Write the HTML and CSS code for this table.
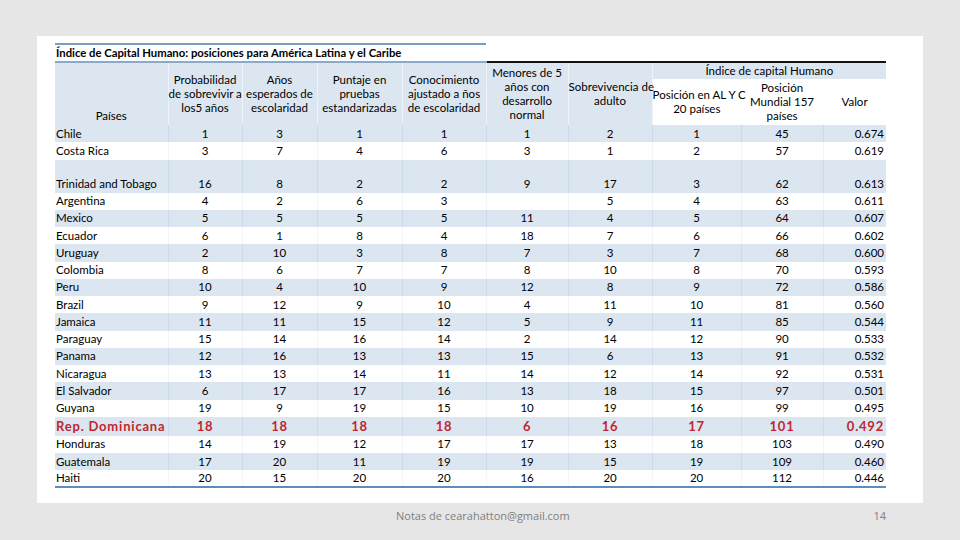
FILE: index.html
```html
<!DOCTYPE html>
<html lang="es">
<head>
<meta charset="utf-8">
<title>Índice de Capital Humano</title>
<link rel="stylesheet" href="styles.css">
</head>
<body>
<div class="page">
  <div class="slide">
    <table class="hci">
      <colgroup>
        <col class="c1"><col class="c2"><col class="c3"><col class="c4"><col class="c5">
        <col class="c6"><col class="c7"><col class="c8"><col class="c9"><col class="c10">
      </colgroup>
      <thead>
        <tr class="title-row">
          <td colspan="5" class="title">Índice de Capital Humano: posiciones para América Latina y el Caribe</td>
          <td colspan="5" class="title-right"></td>
        </tr>
        <tr class="head-top">
          <th rowspan="2" class="h-pais">Países</th>
          <th rowspan="2" class="h">Probabilidad<br>de sobrevivir a<br>los5 años</th>
          <th rowspan="2" class="h">Años<br>esperados de<br>escolaridad</th>
          <th rowspan="2" class="h">Puntaje en<br>pruebas<br>estandarizadas</th>
          <th rowspan="2" class="h">Conocimiento<br>ajustado a ños<br>de escolaridad</th>
          <th rowspan="2" class="h">Menores de 5<br>años con<br>desarrollo<br>normal</th>
          <th rowspan="2" class="h h-over">Sobrevivencia de<br>adulto</th>
          <th colspan="3" class="h h-group">Índice de capital Humano</th>
        </tr>
        <tr class="head-sub">
          <th class="h sub h-over">Posición en AL Y C<br>20 países</th>
          <th class="h sub">Posición<br>Mundial 157<br>países</th>
          <th class="h sub">Valor</th>
        </tr>
      </thead>
      <tbody>
        <tr class="b"><td>Chile</td><td>1</td><td>3</td><td>1</td><td>1</td><td>1</td><td>2</td><td>1</td><td>45</td><td>0.674</td></tr>
        <tr class="w"><td>Costa Rica</td><td>3</td><td>7</td><td>4</td><td>6</td><td>3</td><td>1</td><td>2</td><td>57</td><td>0.619</td></tr>
        <tr class="b tall"><td>Trinidad and Tobago</td><td>16</td><td>8</td><td>2</td><td>2</td><td>9</td><td>17</td><td>3</td><td>62</td><td>0.613</td></tr>
        <tr class="w"><td>Argentina</td><td>4</td><td>2</td><td>6</td><td>3</td><td></td><td>5</td><td>4</td><td>63</td><td>0.611</td></tr>
        <tr class="b"><td>Mexico</td><td>5</td><td>5</td><td>5</td><td>5</td><td>11</td><td>4</td><td>5</td><td>64</td><td>0.607</td></tr>
        <tr class="w"><td>Ecuador</td><td>6</td><td>1</td><td>8</td><td>4</td><td>18</td><td>7</td><td>6</td><td>66</td><td>0.602</td></tr>
        <tr class="b"><td>Uruguay</td><td>2</td><td>10</td><td>3</td><td>8</td><td>7</td><td>3</td><td>7</td><td>68</td><td>0.600</td></tr>
        <tr class="w"><td>Colombia</td><td>8</td><td>6</td><td>7</td><td>7</td><td>8</td><td>10</td><td>8</td><td>70</td><td>0.593</td></tr>
        <tr class="b"><td>Peru</td><td>10</td><td>4</td><td>10</td><td>9</td><td>12</td><td>8</td><td>9</td><td>72</td><td>0.586</td></tr>
        <tr class="w"><td>Brazil</td><td>9</td><td>12</td><td>9</td><td>10</td><td>4</td><td>11</td><td>10</td><td>81</td><td>0.560</td></tr>
        <tr class="b"><td>Jamaica</td><td>11</td><td>11</td><td>15</td><td>12</td><td>5</td><td>9</td><td>11</td><td>85</td><td>0.544</td></tr>
        <tr class="w"><td>Paraguay</td><td>15</td><td>14</td><td>16</td><td>14</td><td>2</td><td>14</td><td>12</td><td>90</td><td>0.533</td></tr>
        <tr class="b"><td>Panama</td><td>12</td><td>16</td><td>13</td><td>13</td><td>15</td><td>6</td><td>13</td><td>91</td><td>0.532</td></tr>
        <tr class="w"><td>Nicaragua</td><td>13</td><td>13</td><td>14</td><td>11</td><td>14</td><td>12</td><td>14</td><td>92</td><td>0.531</td></tr>
        <tr class="b"><td>El Salvador</td><td>6</td><td>17</td><td>17</td><td>16</td><td>13</td><td>18</td><td>15</td><td>97</td><td>0.501</td></tr>
        <tr class="w"><td>Guyana</td><td>19</td><td>9</td><td>19</td><td>15</td><td>10</td><td>19</td><td>16</td><td>99</td><td>0.495</td></tr>
        <tr class="b hl"><td>Rep. Dominicana</td><td>18</td><td>18</td><td>18</td><td>18</td><td>6</td><td>16</td><td>17</td><td>101</td><td>0.492</td></tr>
        <tr class="w"><td>Honduras</td><td>14</td><td>19</td><td>12</td><td>17</td><td>17</td><td>13</td><td>18</td><td>103</td><td>0.490</td></tr>
        <tr class="b"><td>Guatemala</td><td>17</td><td>20</td><td>11</td><td>19</td><td>19</td><td>15</td><td>19</td><td>109</td><td>0.460</td></tr>
        <tr class="w last"><td>Haiti</td><td>20</td><td>15</td><td>20</td><td>20</td><td>16</td><td>20</td><td>20</td><td>112</td><td>0.446</td></tr>
      </tbody>
    </table>
  </div>
  <div class="footer">
    <span class="notes">Notas de cearahatton@gmail.com</span>
    <span class="pnum">14</span>
  </div>
</div>
</body>
</html>
```

FILE: styles.css
```css
html, body {
  margin: 0;
  padding: 0;
}

body {
  background: #e6e6e6;
  font-family: Lato, "Liberation Sans", sans-serif;
  color: #000;
}

.page {
  width: 960px;
  height: 540px;
  padding-top: 36px;
  box-sizing: border-box;
}

.slide {
  margin-left: 37px;
  width: 886px;
  height: 467px;
  background: #fff;
  padding: 7px 0 0 18px;
  box-sizing: border-box;
}

.hci {
  width: 831px;
  table-layout: fixed;
  border-collapse: collapse;
  font-size: 11.5px;
  line-height: 14px;
}

.c1 { width: 113px; }
.c2 { width: 74px; }
.c3 { width: 75px; }
.c4 { width: 85px; }
.c5 { width: 84px; }
.c6 { width: 82px; }
.c7 { width: 84px; }
.c8 { width: 89px; }
.c9 { width: 82px; }
.c10 { width: 63px; }

.hci td, .hci th {
  padding: 0;
  font-weight: normal;
}

/* title row */
.hci .title-row td {
  height: 16px;
}

.hci .title {
  border-top: 2px solid #7a9cc0;
  border-bottom: 2px solid #8aa9cb;
  font-weight: bold;
  font-size: 11.3px;
  padding-left: 1px;
  white-space: nowrap;
  vertical-align: middle;
}

.hci .title-right {
  border-bottom: 2px solid #111;
}

/* header */
.h, .h-pais {
  background: #dce6f1;
  text-align: center;
  vertical-align: middle;
  border-right: 1px solid #eef3f9;
  white-space: nowrap;
}

.head-top th {
  height: 16px;
}

.head-sub th {
  height: 46px;
}

.hci .h-pais {
  vertical-align: bottom;
  padding-bottom: 2px;
}

.h-over {
  overflow: visible;
}

.h-group {
  border-right: none;
}

.h.sub {
  background: #fff;
  border-right: none;
}

/* body */
.hci tbody td {
  height: 17.25px;
  text-align: center;
  vertical-align: middle;
  white-space: nowrap;
}

.hci tbody td:first-child {
  text-align: left;
  padding-left: 1px;
}

.hci tbody td:last-child {
  text-align: right;
  padding-right: 2px;
}

.hci tbody tr.b td {
  background: #dce6f1;
  border-right: 1px solid #cbd9ea;
}

.hci tbody tr.w td {
  background: #fff;
  border-right: 1px solid #f3f6fa;
}

.hci tbody td:last-child {
  border-right: none !important;
}

.hci tbody tr.tall td {
  height: 31px;
  vertical-align: bottom;
  padding-bottom: 2px;
}

.hci tbody tr.hl td {
  height: 19px;
  color: #c0272d;
  font-weight: bold;
  font-size: 13px;
  letter-spacing: 0.8px;
}

.hci tbody tr.last td {
  height: 16px;
  border-bottom: 2px solid #5f8cbd;
}

/* footer */
.footer {
  display: flex;
  justify-content: space-between;
  align-items: center;
  margin-left: 396px;
  width: 490px;
  height: 24px;
  margin-top: 0;
  font-size: 11px;
  color: #7f7f7f;
  font-family: "Open Sans", "Liberation Sans", sans-serif;
}
```
